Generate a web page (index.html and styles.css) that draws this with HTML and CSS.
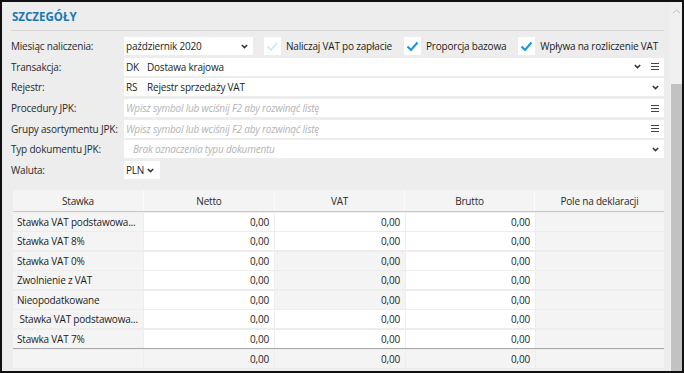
FILE: index.html
```html
<!DOCTYPE html>
<html lang="pl">
<head>
    <meta charset="UTF-8">
    <title>Szczegóły</title>
    <link rel="stylesheet" href="styles.css">
</head>
<body>
    <div class="window">
        <div class="content">
            <h1 class="section-title">SZCZEGÓŁY</h1>

            <div class="form">
                <label class="form-label">Miesiąc naliczenia:</label>
                <div class="form-line">
                    <div class="field field-month">
                        <span class="field-text">październik 2020</span>
                        <svg class="chevron" width="7" height="5" viewBox="0 0 7 5"><polyline points="0.8,1 3.5,3.6 6.2,1" fill="none" stroke="#333" stroke-width="1.5"/></svg>
                    </div>
                    <label class="check">
                        <span class="check-box">
                            <svg width="13" height="11" viewBox="0 0 13 11"><polyline points="1.5,5.5 5,9 11.5,1.5" fill="none" stroke="#cfe6f4" stroke-width="1.6"/></svg>
                        </span>
                        Naliczaj VAT po zapłacie
                    </label>
                    <label class="check">
                        <span class="check-box">
                            <svg width="13" height="11" viewBox="0 0 13 11"><polyline points="1.5,5.5 5,9 11.5,1.5" fill="none" stroke="#1b9ad8" stroke-width="2.2"/></svg>
                        </span>
                        Proporcja bazowa
                    </label>
                    <label class="check">
                        <span class="check-box">
                            <svg width="13" height="11" viewBox="0 0 13 11"><polyline points="1.5,5.5 5,9 11.5,1.5" fill="none" stroke="#1b9ad8" stroke-width="2.2"/></svg>
                        </span>
                        Wpływa na rozliczenie VAT
                    </label>
                </div>

                <label class="form-label">Transakcja:</label>
                <div class="field">
                    <span class="field-code">DK</span>
                    <span class="field-text">Dostawa krajowa</span>
                    <svg class="chevron" width="7" height="5" viewBox="0 0 7 5"><polyline points="0.8,1 3.5,3.6 6.2,1" fill="none" stroke="#333" stroke-width="1.5"/></svg>
                    <svg class="menu-icon" width="8" height="7" viewBox="0 0 8 7"><path d="M0 0.5H8M0 3.5H8M0 6.5H8" stroke="#444" stroke-width="1"/></svg>
                </div>

                <label class="form-label">Rejestr:</label>
                <div class="field">
                    <span class="field-code">RS</span>
                    <span class="field-text">Rejestr sprzedaży VAT</span>
                    <svg class="chevron" width="7" height="5" viewBox="0 0 7 5"><polyline points="0.8,1 3.5,3.6 6.2,1" fill="none" stroke="#333" stroke-width="1.5"/></svg>
                </div>

                <label class="form-label">Procedury JPK:</label>
                <div class="field">
                    <span class="field-text placeholder">Wpisz symbol lub wciśnij F2 aby rozwinąć listę</span>
                    <svg class="menu-icon" width="8" height="7" viewBox="0 0 8 7"><path d="M0 0.5H8M0 3.5H8M0 6.5H8" stroke="#444" stroke-width="1"/></svg>
                </div>

                <label class="form-label">Grupy asortymentu JPK:</label>
                <div class="field">
                    <span class="field-text placeholder">Wpisz symbol lub wciśnij F2 aby rozwinąć listę</span>
                    <svg class="menu-icon" width="8" height="7" viewBox="0 0 8 7"><path d="M0 0.5H8M0 3.5H8M0 6.5H8" stroke="#444" stroke-width="1"/></svg>
                </div>

                <label class="form-label">Typ dokumentu JPK:</label>
                <div class="field">
                    <span class="field-text placeholder indent">Brak oznaczenia typu dokumentu</span>
                    <svg class="chevron" width="7" height="5" viewBox="0 0 7 5"><polyline points="0.8,1 3.5,3.6 6.2,1" fill="none" stroke="#333" stroke-width="1.5"/></svg>
                </div>

                <label class="form-label">Waluta:</label>
                <div class="form-line">
                    <div class="field field-currency">
                        <span class="field-text">PLN</span>
                        <svg class="chevron" width="7" height="5" viewBox="0 0 7 5"><polyline points="0.8,1 3.5,3.6 6.2,1" fill="none" stroke="#333" stroke-width="1.5"/></svg>
                    </div>
                </div>
            </div>

            <div class="rates">
                <div class="rates-row rates-head">
                    <div class="head-cell">Stawka</div>
                    <div class="head-cell">Netto</div>
                    <div class="head-cell">VAT</div>
                    <div class="head-cell">Brutto</div>
                    <div class="head-cell">Pole na deklaracji</div>
                </div>

                <div class="rates-body">
                    <div class="rates-row">
                        <div class="cell name">Stawka VAT podstawowa...</div>
                        <div class="cell num">0,00</div>
                        <div class="cell num">0,00</div>
                        <div class="cell num">0,00</div>
                        <div class="cell ro"></div>
                    </div>
                    <div class="rates-row">
                        <div class="cell name">Stawka VAT 8%</div>
                        <div class="cell num">0,00</div>
                        <div class="cell num">0,00</div>
                        <div class="cell num">0,00</div>
                        <div class="cell ro"></div>
                    </div>
                    <div class="rates-row">
                        <div class="cell name">Stawka VAT 0%</div>
                        <div class="cell num">0,00</div>
                        <div class="cell num ro">0,00</div>
                        <div class="cell num">0,00</div>
                        <div class="cell ro"></div>
                    </div>
                    <div class="rates-row">
                        <div class="cell name">Zwolnienie z VAT</div>
                        <div class="cell num">0,00</div>
                        <div class="cell num ro">0,00</div>
                        <div class="cell num">0,00</div>
                        <div class="cell ro"></div>
                    </div>
                    <div class="rates-row">
                        <div class="cell name">Nieopodatkowane</div>
                        <div class="cell num">0,00</div>
                        <div class="cell num ro">0,00</div>
                        <div class="cell num">0,00</div>
                        <div class="cell ro"></div>
                    </div>
                    <div class="rates-row">
                        <div class="cell name">&nbsp;Stawka VAT podstawowa...</div>
                        <div class="cell num">0,00</div>
                        <div class="cell num">0,00</div>
                        <div class="cell num">0,00</div>
                        <div class="cell ro"></div>
                    </div>
                    <div class="rates-row">
                        <div class="cell name">Stawka VAT 7%</div>
                        <div class="cell num">0,00</div>
                        <div class="cell num">0,00</div>
                        <div class="cell num">0,00</div>
                        <div class="cell ro"></div>
                    </div>
                </div>

                <div class="rates-row rates-total">
                    <div class="cell ro"></div>
                    <div class="cell num ro">0,00</div>
                    <div class="cell num ro">0,00</div>
                    <div class="cell num ro">0,00</div>
                    <div class="cell ro"></div>
                </div>
            </div>
        </div>

        <div class="scrollbar">
            <svg class="scroll-arrow" width="9" height="5" viewBox="0 0 9 5"><polyline points="1,4 4.5,1 8,4" fill="none" stroke="#c4c4c4" stroke-width="1"/></svg>
            <div class="scroll-thumb"></div>
        </div>
    </div>
</body>
</html>
```

FILE: styles.css
```css
body {
    margin: 0;
    font-family: 'Open Sans', 'Noto Sans', sans-serif;
    font-size: 10px;
    letter-spacing: -0.2px;
    color: #1c1c1c;
    background-color: #fff;
}
.window {
    width: 684px;
    height: 373px;
    box-sizing: border-box;
    border: 2px solid #111;
    background-color: #ededed;
    display: flex;
    overflow: hidden;
}
.content {
    flex: 1;
    padding: 0 6px 0 9px;
    min-width: 0;
}
.section-title {
    margin: 0;
    padding: 7px 0 0 1px;
    height: 29px;
    box-sizing: border-box;
    font-size: 11.5px;
    font-weight: 700;
    letter-spacing: 0;
    color: #1b78b3;
    border-bottom: 1px solid #d7d7d7;
    line-height: 15px;
}
.form {
    display: grid;
    grid-template-columns: 113px 1fr;
    grid-auto-rows: 18px;
    row-gap: 2.7px;
    margin-top: 6px;
}
.form-label {
    display: flex;
    align-items: center;
    color: #2a2a2a;
    white-space: nowrap;
}
.form-line {
    display: flex;
    align-items: center;
}
.field {
    display: flex;
    align-items: center;
    background-color: #fff;
    height: 18px;
    padding: 0 5px 0 2px;
    box-sizing: border-box;
}
.field-code {
    width: 21px;
}
.field-text {
    flex: 1;
    white-space: nowrap;
    overflow: hidden;
}
.placeholder {
    color: #b4b4b4;
    font-style: italic;
}
.indent {
    padding-left: 7px;
}
.chevron {
    flex: none;
}
.menu-icon {
    flex: none;
    margin-left: 10px;
}
.field-month {
    width: 129px;
}
.field-currency {
    width: 36px;
    padding-right: 6px;
}
.check {
    display: flex;
    align-items: center;
    gap: 5px;
    margin-left: 11px;
    white-space: nowrap;
}
.check + .check {
    margin-left: 12px;
}
.check-box {
    width: 17px;
    height: 18px;
    background-color: #fff;
    display: flex;
    align-items: center;
    justify-content: center;
}
.rates {
    margin: 11px 0 0 2px;
}
.rates-row {
    display: grid;
    grid-template-columns: 130px 130px 130px 129px 1fr;
    column-gap: 1px;
    height: 18px;
}
.rates-head {
    height: 21px;
    column-gap: 0;
    grid-template-columns: 131px 131px 130px 130px 1fr;
    border-bottom: 1px solid #c9c9c9;
}
.head-cell {
    display: flex;
    align-items: center;
    justify-content: center;
    background-color: #f4f4f4;
    border-right: 1px solid #fbfbfb;
    color: #2a2a2a;
}
.head-cell:last-child {
    border-right: none;
}
.rates-body {
    display: flex;
    flex-direction: column;
    gap: 1.5px;
    padding-top: 0.5px;
}
.cell {
    background-color: #fff;
    display: flex;
    align-items: center;
    padding: 0 5px;
    white-space: nowrap;
    overflow: hidden;
}
.cell.name {
    background-color: #f4f4f4;
    padding-left: 4px;
}
.cell.num {
    justify-content: flex-end;
}
.cell.ro {
    background-color: #f4f4f4;
}
.rates-total {
    margin-top: 0.5px;
    border-top: 1px solid #a8a8a8;
    padding-top: 1px;
}
.scrollbar {
    width: 12px;
    background-color: #f0f0f0;
    display: flex;
    flex-direction: column;
    align-items: center;
}
.scroll-arrow {
    margin-top: 7px;
}
.scroll-thumb {
    margin-top: 70px;
    width: 11px;
    flex: 1;
    background-color: #c2c2c2;
}
```
